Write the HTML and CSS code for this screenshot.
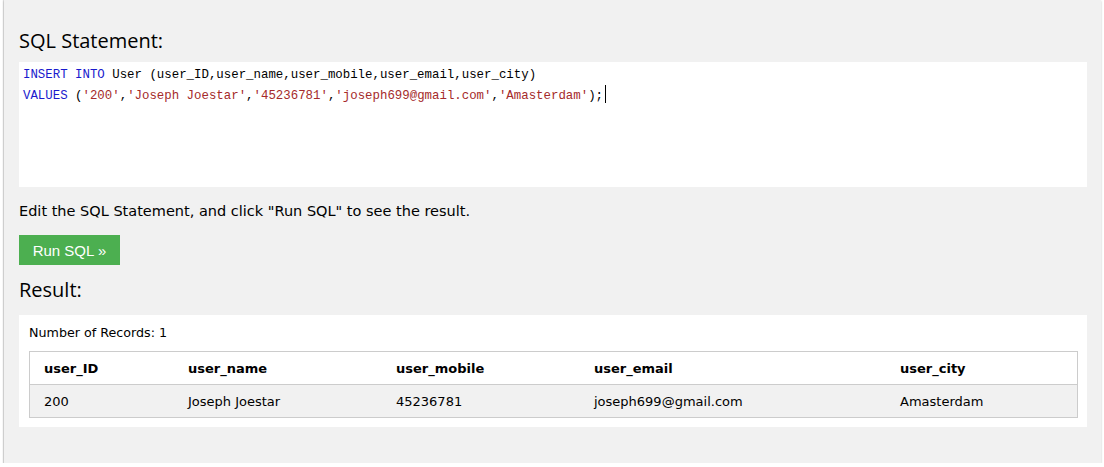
FILE: index.html
```html
<!DOCTYPE html>
<html>
<head>
<meta charset="utf-8">
<link rel="stylesheet" href="styles.css">
</head>
<body>
<div class="panel">
  <h3 class="title">SQL Statement:</h3>
  <div class="code">
    <div class="line"><span class="kw">INSERT</span> <span class="kw">INTO</span> User (user_ID,user_name,user_mobile,user_email,user_city)</div>
    <div class="line"><span class="kw">VALUES</span> (<span class="str">'200'</span>,<span class="str">'Joseph Joestar'</span>,<span class="str">'45236781'</span>,<span class="str">'joseph699@gmail.com'</span>,<span class="str">'Amasterdam'</span>);<span class="caret"></span></div>
  </div>
  <p class="hint">Edit the SQL Statement, and click "Run SQL" to see the result.</p>
  <button class="run">Run SQL »</button>
  <h3 class="title result-title">Result:</h3>
  <div class="result">
    <div class="count">Number of Records: 1</div>
    <table class="grid">
      <tr class="head">
        <th class="c1">user_ID</th>
        <th class="c2">user_name</th>
        <th class="c3">user_mobile</th>
        <th class="c4">user_email</th>
        <th class="c5">user_city</th>
      </tr>
      <tr class="row">
        <td>200</td>
        <td>Joseph Joestar</td>
        <td>45236781</td>
        <td>joseph699@gmail.com</td>
        <td>Amasterdam</td>
      </tr>
    </table>
  </div>
</div>
</body>
</html>
```
FILE: styles.css
```css
html, body {
  margin: 0;
  padding: 0;
  background: #ffffff;
}
.panel {
  margin-left: 4px;
  width: 1097px;
  height: 463px;
  box-sizing: border-box;
  background: #f1f1f1;
  padding: 20px 14px 0 15px;
  box-shadow: 0 1px 2px rgba(0,0,0,0.25), -1px 0 1px rgba(0,0,0,0.12);
  display: flex;
  flex-direction: column;
}
.title {
  margin: 0;
  font-family: "Open Sans", "Noto Sans", sans-serif;
  font-weight: normal;
  font-size: 20px;
  line-height: 42px;
  color: #000;
}
.code {
  background: #fff;
  height: 125px;
  box-sizing: border-box;
  padding: 3px 4px 0 4px;
  font-family: "Liberation Mono", monospace;
  font-size: 12.4px;
  line-height: 20px;
  color: #000;
}
.kw { color: #1a1acd; }
.str { color: #a52a2a; }
.caret {
  display: inline-block;
  width: 1px;
  height: 18px;
  background: #000;
  vertical-align: -4px;
  margin-left: 2px;
}
.hint {
  margin: 14px 0 0 0;
  font-family: "DejaVu Sans", Verdana, sans-serif;
  font-size: 14.5px;
  line-height: 20px;
  color: #000;
}
.run {
  margin-top: 14px;
  align-self: flex-start;
  width: 101px;
  height: 30px;
  border: none;
  background: #4caf50;
  color: #fff;
  font-family: "Liberation Sans", Arial, sans-serif;
  font-size: 15px;
  padding: 0;
}
.result-title {
  line-height: 50px;
}
.result {
  background: #fff;
  height: 112px;
  box-sizing: border-box;
  padding: 9px 9px 0 10px;
}
.count {
  font-family: "DejaVu Sans", Verdana, sans-serif;
  font-size: 12.7px;
  line-height: 18px;
  color: #000;
  margin-bottom: 9px;
}
.grid {
  width: 1049px;
  border-collapse: collapse;
  border: 1px solid #ccc;
  font-family: "DejaVu Sans", Verdana, sans-serif;
  font-size: 13px;
  color: #000;
}
.grid th, .grid td {
  text-align: left;
  padding: 0 0 0 14px;
  height: 32px;
}
.grid th { font-weight: bold; }
.row td {
  background: #f1f1f1;
  border-top: 1px solid #ccc;
}
.c1 { width: 130px; }
.c2 { width: 194px; }
.c3 { width: 184px; }
.c4 { width: 292px; }
```
